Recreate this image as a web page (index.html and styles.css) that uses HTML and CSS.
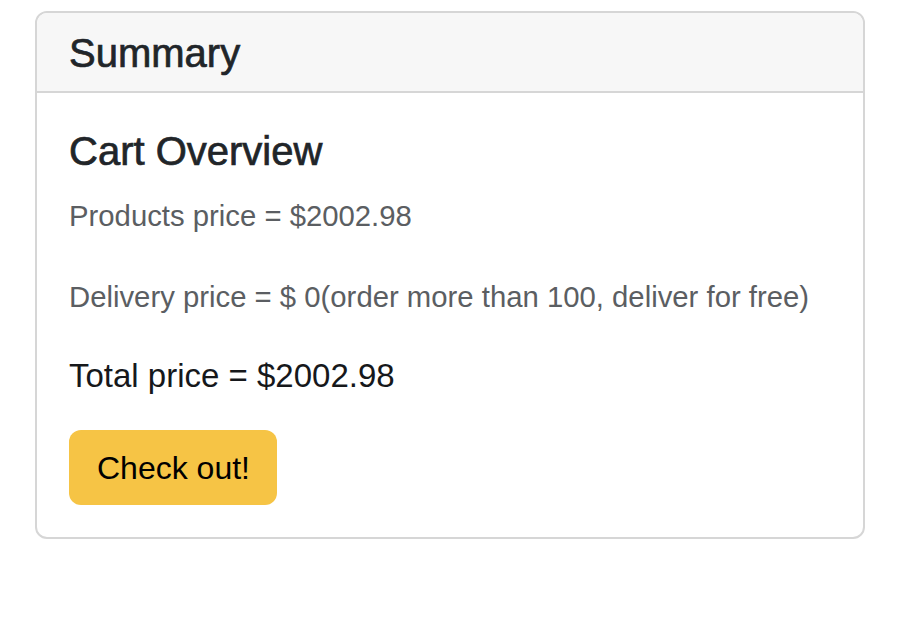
FILE: index.html
```html
<!DOCTYPE html>
<html>
<head>
<meta charset="utf-8">
<link rel="stylesheet" href="styles.css">
</head>
<body>
<div class="card">
  <div class="card-header">
    <h3 class="header-title">Summary</h3>
  </div>
  <div class="card-body">
    <h4 class="card-title">Cart Overview</h4>
    <p class="muted products">Products price = $2002.98</p>
    <p class="muted delivery">Delivery price = $ 0(order more than 100, deliver for free)</p>
    <p class="total">Total price = $2002.98</p>
    <button class="btn-checkout">Check out!</button>
  </div>
</div>
</body>
</html>
```
FILE: styles.css
```css
html, body {
  margin: 0;
  background: #ffffff;
}
body {
  padding: 11px 0 0 35px;
  font-family: "Liberation Sans", Arial, sans-serif;
  color: #212529;
}
.card {
  width: 830px;
  box-sizing: border-box;
  border: 2px solid #d6d6d6;
  border-radius: 12px;
  overflow: hidden;
}
.card-header {
  background: #f7f7f7;
  border-bottom: 2px solid #d6d6d6;
  padding: 16px 32px 14px;
}
.header-title {
  margin: 0;
  font-size: 40px;
  line-height: 48px;
  font-weight: 400;
  -webkit-text-stroke: 0.7px #212529;
  color: #212529;
}
.card-body {
  padding: 32px 32px 32px;
}
.card-title {
  margin: 0 0 17px;
  font-size: 40px;
  line-height: 52px;
  font-weight: 400;
  -webkit-text-stroke: 0.7px #212529;
  color: #212529;
}
.muted {
  font-size: 29.3px;
  line-height: 44px;
  color: #5b5e62;
  margin: 0;
}
.products {
  margin-bottom: 37px;
}
.delivery {
  margin-bottom: 33px;
}
.total {
  margin: 0 0 30px;
  font-size: 33px;
  line-height: 48px;
  color: #16181b;
}
.btn-checkout {
  display: block;
  font-family: "Liberation Sans", Arial, sans-serif;
  font-size: 32px;
  line-height: 48px;
  padding: 14px 27px 13px 28px;
  background: #f6c445;
  border: none;
  border-radius: 12px;
  color: #000;
}
```
